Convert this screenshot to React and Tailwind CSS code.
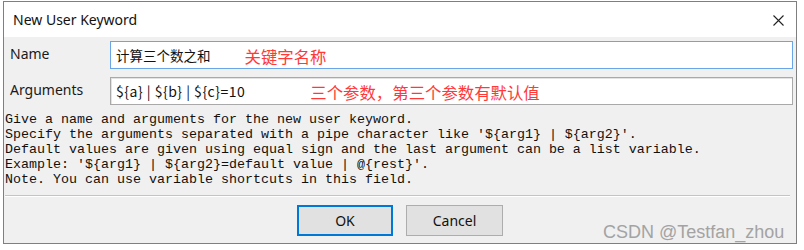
import React from 'react'

const ui = { fontFamily: '"Noto Sans", "Noto Sans CJK SC", sans-serif' }
const cjk = { fontFamily: '"Noto Sans CJK SC", "Noto Sans", sans-serif' }
const mono = { fontFamily: '"Liberation Mono", monospace' }

const helpLines = [
  'Give a name and arguments for the new user keyword.',
  "Specify the arguments separated with a pipe character like '${arg1} | ${arg2}'.",
  'Default values are given using equal sign and the last argument can be a list variable.',
  "Example: '${arg1} | ${arg2}=default value | @{rest}'.",
  'Note. You can use variable shortcuts in this field.',
]

const Field = ({ label, value, valueClass, note, gap, focused }) => (
  <div className="flex h-[28px] items-stretch">
    <div className="flex w-[106px] shrink-0 items-center pb-[3px] pl-[6px] text-[14px] text-[#1a1a1a]" style={ui}>
      {label}
    </div>
    <div
      className={`mr-[3px] flex flex-1 items-center border bg-white pl-[5px] ${
        focused ? 'border-[#6aa5e8]' : 'border-[#a9a9a9] shadow-[inset_1px_1px_0_#e3e3e3]'
      }`}
    >
      <span className={`whitespace-pre text-[#111] ${valueClass}`} style={cjk}>
        {value}
      </span>
      <span className={`${gap} translate-y-[1px] whitespace-pre text-[16.4px] text-[#ff3838]`} style={cjk}>
        {note}
      </span>
    </div>
  </div>
)

export default function App() {
  return (
    <div className="relative h-[250px] w-[804px] overflow-hidden bg-white pl-[3px] pt-[1px]">
      <div className="flex h-[243px] w-[794px] flex-col border border-[#7f7f7f] bg-[#f0f0f0]">
        <div className="flex h-[35px] shrink-0 items-center justify-between bg-white pl-[9px] pr-[12px]">
          <span className="text-[14px] text-[#111]" style={ui}>
            New User Keyword
          </span>
          <svg width="11" height="11" viewBox="0 0 11 11" className="mt-[1px]">
            <path d="M0.5 0.5 L10.5 10.5 M10.5 0.5 L0.5 10.5" stroke="#222" strokeWidth="1.1" fill="none" />
          </svg>
        </div>

        <div className="flex flex-1 flex-col pt-[4px]">
          <div className="flex flex-col gap-[8px]">
            <Field
              label="Name"
              value="计算三个数之和"
              valueClass="text-[13.5px]"
              note="关键字名称"
              gap="ml-[34px]"
              focused
            />
            <Field
              label="Arguments"
              value="${a} | ${b} | ${c}=10"
              valueClass="text-[14px] tracking-[0.5px]"
              note="三个参数，第三个参数有默认值"
              gap="ml-[65px]"
            />
          </div>

          <div className="mt-[7px] pl-[1px] text-[13.33px] leading-[15px] text-[#101010]" style={mono}>
            {helpLines.map((line) => (
              <div key={line} className="whitespace-pre">
                {line}
              </div>
            ))}
          </div>

          <div className="ml-[1px] mr-[6px] mt-[8px] h-[2px] border-t border-[#c4c4c4] bg-white" />

          <div className="mt-[8px] flex justify-center gap-[13px]" style={ui}>
            <button className="flex h-[31px] w-[96px] items-center justify-center border-2 border-[#0078d7] bg-[#e1e1e1] text-[14px] text-[#111]">
              OK
            </button>
            <button className="flex h-[31px] w-[97px] items-center justify-center border border-[#adadad] bg-[#e1e1e1] text-[14px] text-[#111]">
              Cancel
            </button>
          </div>
        </div>
      </div>

      <span
        className="absolute left-[603px] top-[220px] text-[18px] leading-[24px] text-[#a3a3a3]"
        style={{ fontFamily: '"Liberation Sans", Arial, sans-serif' }}
      >
        CSDN @Testfan_zhou
      </span>
    </div>
  )
}
